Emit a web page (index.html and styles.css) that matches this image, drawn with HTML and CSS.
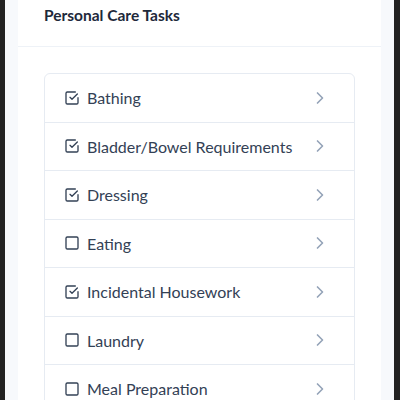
FILE: index.html
```html
<!DOCTYPE html>
<html>
<head>
    <meta charset="utf-8">
    <title>Personal Care Tasks</title>
    <link rel="stylesheet" href="styles.css">
</head>
<body>
    <div class="frame">
        <div class="card">
            <div class="card-header">
                <h2>Personal Care Tasks</h2>
            </div>

            <div class="card-body">
                <ul class="task-list">
                    <li class="task">
                        <svg class="check" viewBox="0 0 24 24"><path d="M21 11.5V19a2 2 0 0 1-2 2H5a2 2 0 0 1-2-2V5a2 2 0 0 1 2-2h12"/><path d="m9 11 3 3 8-8"/></svg>
                        <span class="task-name">Bathing</span>
                        <svg class="chevron" viewBox="0 0 24 24"><path d="m9 18 6-6-6-6"/></svg>
                    </li>
                    <li class="task">
                        <svg class="check" viewBox="0 0 24 24"><path d="M21 11.5V19a2 2 0 0 1-2 2H5a2 2 0 0 1-2-2V5a2 2 0 0 1 2-2h12"/><path d="m9 11 3 3 8-8"/></svg>
                        <span class="task-name">Bladder/Bowel Requirements</span>
                        <svg class="chevron" viewBox="0 0 24 24"><path d="m9 18 6-6-6-6"/></svg>
                    </li>
                    <li class="task">
                        <svg class="check" viewBox="0 0 24 24"><path d="M21 11.5V19a2 2 0 0 1-2 2H5a2 2 0 0 1-2-2V5a2 2 0 0 1 2-2h12"/><path d="m9 11 3 3 8-8"/></svg>
                        <span class="task-name">Dressing</span>
                        <svg class="chevron" viewBox="0 0 24 24"><path d="m9 18 6-6-6-6"/></svg>
                    </li>
                    <li class="task">
                        <svg class="check" viewBox="0 0 24 24"><rect x="3" y="3" width="18" height="18" rx="2"/></svg>
                        <span class="task-name">Eating</span>
                        <svg class="chevron" viewBox="0 0 24 24"><path d="m9 18 6-6-6-6"/></svg>
                    </li>
                    <li class="task">
                        <svg class="check" viewBox="0 0 24 24"><path d="M21 11.5V19a2 2 0 0 1-2 2H5a2 2 0 0 1-2-2V5a2 2 0 0 1 2-2h12"/><path d="m9 11 3 3 8-8"/></svg>
                        <span class="task-name">Incidental Housework</span>
                        <svg class="chevron" viewBox="0 0 24 24"><path d="m9 18 6-6-6-6"/></svg>
                    </li>
                    <li class="task">
                        <svg class="check" viewBox="0 0 24 24"><rect x="3" y="3" width="18" height="18" rx="2"/></svg>
                        <span class="task-name">Laundry</span>
                        <svg class="chevron" viewBox="0 0 24 24"><path d="m9 18 6-6-6-6"/></svg>
                    </li>
                    <li class="task">
                        <svg class="check" viewBox="0 0 24 24"><rect x="3" y="3" width="18" height="18" rx="2"/></svg>
                        <span class="task-name">Meal Preparation</span>
                        <svg class="chevron" viewBox="0 0 24 24"><path d="m9 18 6-6-6-6"/></svg>
                    </li>
                </ul>
            </div>
        </div>
    </div>
</body>
</html>
```

FILE: styles.css
```css
html, body {
    margin: 0;
    height: 100%;
    background-color: #222;
}
body {
    font-family: Lato, 'Noto Sans', sans-serif;
    overflow: hidden;
}
.frame {
    margin: 0 6px 0 5px;
    padding: 0 13px;
    height: 100%;
    background: #f7f9fc;
}
.card {
    background: white;
    height: 100%;
}
.card-header {
    height: 46px;
    padding: 0 26px;
    border-bottom: 1px solid #eef2f7;
}
.card-header h2 {
    margin: 0;
    padding-top: 4px;
    font-size: 15.5px;
    line-height: 22px;
    font-weight: 700;
    color: #1e293b;
}
.card-body {
    padding: 26px 26px 0;
}
.task-list {
    list-style: none;
    margin: 0;
    padding: 0;
    border: 1px solid #e6ebf2;
    border-radius: 6px;
}
.task {
    display: flex;
    align-items: center;
    height: 47.5px;
    padding: 0 24px 0 19px;
    border-bottom: 1px solid #e6ebf2;
}
.check {
    width: 16px;
    height: 16px;
    fill: none;
    stroke: #334155;
    stroke-width: 2;
    stroke-linecap: round;
    stroke-linejoin: round;
    margin-right: 7px;
}
.task-name {
    flex: 1;
    font-size: 16px;
    color: #334155;
}
.chevron {
    width: 20px;
    height: 20px;
    fill: none;
    stroke: #94a3b8;
    stroke-width: 2;
    stroke-linecap: round;
    stroke-linejoin: round;
}
```
